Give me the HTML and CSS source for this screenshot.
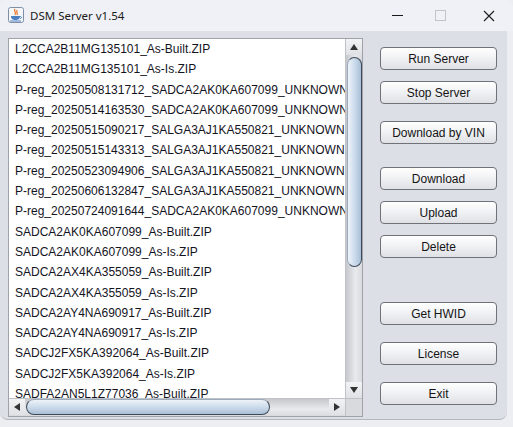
FILE: index.html
```html
<!DOCTYPE html>
<html lang="en">
<head>
    <meta charset="UTF-8">
    <title>DSM Server v1.54</title>
    <link rel="stylesheet" href="styles.css">
</head>
<body>
<div class="window">
    <div class="titlebar">
        <svg class="app-icon" width="16" height="16" viewBox="0 0 16 16">
            <rect x="0.5" y="0.5" width="15" height="15" rx="2" fill="#f4f6fa" stroke="#7f8fa6"/>
            <path d="M7 2 C5 4 9 5 7 8 M9 3 C8 5 10 6 9 8" stroke="#e8782a" stroke-width="1.3" fill="none"/>
            <path d="M3 9 H12 C12 12 10 13 7.5 13 C5 13 3 12 3 9 Z" fill="#4a7fc1"/>
            <path d="M12 9.5 C14 9.5 14 11.5 12 11.5" stroke="#4a7fc1" fill="none"/>
            <rect x="2" y="13.5" width="11" height="1" fill="#4a7fc1"/>
        </svg>
        <span class="title">DSM Server v1.54</span>
        <div class="controls">
            <span class="ctl ctl-min"></span>
            <span class="ctl ctl-max"></span>
            <svg class="ctl ctl-close" width="12" height="12" viewBox="0 0 12 12">
                <path d="M1 1 L11 11 M11 1 L1 11" stroke="#1a1a1a" stroke-width="1.1"/>
            </svg>
        </div>
    </div>
    <div class="content">
        <div class="list-panel">
            <div class="list-view">
                <ul class="files">
                    <li>L2CCA2B11MG135101_As-Built.ZIP</li>
                    <li>L2CCA2B11MG135101_As-Is.ZIP</li>
                    <li>P-reg_20250508131712_SADCA2AK0KA607099_UNKNOWN.ZIP</li>
                    <li>P-reg_20250514163530_SADCA2AK0KA607099_UNKNOWN.ZIP</li>
                    <li>P-reg_20250515090217_SALGA3AJ1KA550821_UNKNOWN.ZIP</li>
                    <li>P-reg_20250515143313_SALGA3AJ1KA550821_UNKNOWN.ZIP</li>
                    <li>P-reg_20250523094906_SALGA3AJ1KA550821_UNKNOWN.ZIP</li>
                    <li>P-reg_20250606132847_SALGA3AJ1KA550821_UNKNOWN.ZIP</li>
                    <li>P-reg_20250724091644_SADCA2AK0KA607099_UNKNOWN.ZIP</li>
                    <li>SADCA2AK0KA607099_As-Built.ZIP</li>
                    <li>SADCA2AK0KA607099_As-Is.ZIP</li>
                    <li>SADCA2AX4KA355059_As-Built.ZIP</li>
                    <li>SADCA2AX4KA355059_As-Is.ZIP</li>
                    <li>SADCA2AY4NA690917_As-Built.ZIP</li>
                    <li>SADCA2AY4NA690917_As-Is.ZIP</li>
                    <li>SADCJ2FX5KA392064_As-Built.ZIP</li>
                    <li>SADCJ2FX5KA392064_As-Is.ZIP</li>
                    <li>SADFA2AN5L1Z77036_As-Built.ZIP</li>
                </ul>
                <div class="vscroll">
                    <div class="arrow-btn"><span class="tri tri-up"></span></div>
                    <div class="vtrack"><div class="vthumb"></div></div>
                    <div class="arrow-btn"><span class="tri tri-down"></span></div>
                </div>
            </div>
            <div class="hbar">
                <div class="hscroll">
                    <div class="arrow-btn"><span class="tri tri-left"></span></div>
                    <div class="htrack"><div class="hthumb"></div></div>
                    <div class="arrow-btn"><span class="tri tri-right"></span></div>
                </div>
                <div class="corner"></div>
            </div>
        </div>
        <div class="buttons">
            <button class="btn">Run Server</button>
            <button class="btn gap-s">Stop Server</button>
            <button class="btn gap-m">Download by VIN</button>
            <button class="btn gap-l">Download</button>
            <button class="btn gap-s">Upload</button>
            <button class="btn gap-s">Delete</button>
            <button class="btn gap-xl">Get HWID</button>
            <button class="btn gap-m">License</button>
            <button class="btn gap-m">Exit</button>
        </div>
    </div>
    <div class="frame-bottom"></div>
</div>
</body>
</html>
```

FILE: styles.css
```css
body {
    margin: 0;
    background: #eceef2;
    font-family: "Liberation Sans", Arial, sans-serif;
}
.window {
    width: 513px;
    height: 427px;
    display: flex;
    flex-direction: column;
    overflow: hidden;
    border-radius: 8px 8px 0 0;
    background: #eceef2;
}
.titlebar {
    height: 31px;
    flex: none;
    display: flex;
    align-items: center;
    padding-left: 8px;
    background: #eff1f6;
}
.app-icon {
    flex: none;
    margin-top: -2px;
}
.title {
    margin-left: 6px;
    font-family: "Noto Sans", "Open Sans", sans-serif;
    font-size: 11.5px;
    color: #1b1b1b;
    margin-top: -1px;
}
.controls {
    margin-left: auto;
    display: flex;
    align-items: center;
    height: 100%;
}
.ctl {
    display: block;
}
.ctl-min {
    width: 11px;
    height: 1px;
    background: #1a1a1a;
    margin-right: 32px;
}
.ctl-max {
    width: 9px;
    height: 9px;
    border: 1px solid #c2c4c8;
    margin-right: 37px;
}
.ctl-close {
    margin-right: 18px;
}
.content {
    height: 389px;
    flex: none;
    display: flex;
    background: #dcdfe5;
    padding: 7px 0 0 8px;
    box-sizing: border-box;
    border-bottom: 1px solid #b4b7bd;
    border-radius: 0 0 8px 8px;
    width: 507px;
}
.list-panel {
    width: 355px;
    height: 379px;
    flex: none;
    display: flex;
    flex-direction: column;
    border: 1px solid #9fa2a8;
    box-sizing: border-box;
    background: #ffffff;
}
.list-view {
    flex: 1;
    display: flex;
    min-height: 0;
}
.files {
    flex: 1;
    margin: 0;
    padding: 0;
    list-style: none;
    overflow: hidden;
}
.files li {
    height: 20.3px;
    line-height: 20px;
    padding-left: 6px;
    font-size: 12px;
    color: #14141e;
    white-space: nowrap;
}
.vscroll {
    width: 16px;
    flex: none;
    display: flex;
    flex-direction: column;
    background: linear-gradient(to right, #c6c8cd, #e9eaed 60%, #d8dade);
    border-left: 1px solid #c0c2c6;
}
.arrow-btn {
    width: 16px;
    height: 16px;
    flex: none;
    display: flex;
    align-items: center;
    justify-content: center;
    background: linear-gradient(#f2f3f5, #dfe1e4);
}
.tri {
    width: 0;
    height: 0;
    border: 4px solid transparent;
}
.tri-up {
    border-bottom: 6px solid #333;
    border-top: 0;
}
.tri-down {
    border-top: 6px solid #333;
    border-bottom: 0;
}
.tri-left {
    border-right: 6px solid #333;
    border-left: 0;
}
.tri-right {
    border-left: 6px solid #333;
    border-right: 0;
}
.vtrack {
    flex: 1;
    padding-top: 2px;
}
.vthumb {
    height: 210px;
    margin-left: 1px;
    box-sizing: border-box;
    border: 1px solid #3f4a58;
    border-left-color: #9aaabb;
    border-radius: 9px;
    background: linear-gradient(to right, #eef3f9, #c9d9ea 55%, #a9bfd6);
}
.hbar {
    height: 17px;
    flex: none;
    display: flex;
    border-top: 1px solid #c0c2c6;
}
.hscroll {
    flex: 1;
    display: flex;
    background: linear-gradient(#c6c8cd, #e9eaed 60%, #d8dade);
}
.hscroll .arrow-btn {
    height: 16px;
}
.htrack {
    flex: 1;
    padding-left: 1px;
}
.hthumb {
    width: 244px;
    height: 16px;
    box-sizing: border-box;
    border: 1px solid #3f4a58;
    border-top-color: #9aaabb;
    border-radius: 9px;
    background: linear-gradient(#eef3f9, #c9d9ea 55%, #a9bfd6);
}
.corner {
    width: 16px;
    background: #d8dadd;
    border-left: 1px solid #c0c2c6;
}
.buttons {
    display: flex;
    flex-direction: column;
    margin-left: 17px;
    padding-top: 9px;
}
.btn {
    width: 117px;
    height: 23px;
    padding: 0;
    border: 1px solid #6f7379;
    border-radius: 4px;
    background: linear-gradient(#ffffff, #f1f2f4 45%, #dfe1e5);
    font-family: "Liberation Sans", Arial, sans-serif;
    font-size: 12px;
    color: #141414;
}
.gap-s {
    margin-top: 11px;
}
.gap-m {
    margin-top: 17px;
}
.gap-l {
    margin-top: 23px;
}
.gap-xl {
    margin-top: 44px;
}
.frame-bottom {
    flex: 1;
}
```
